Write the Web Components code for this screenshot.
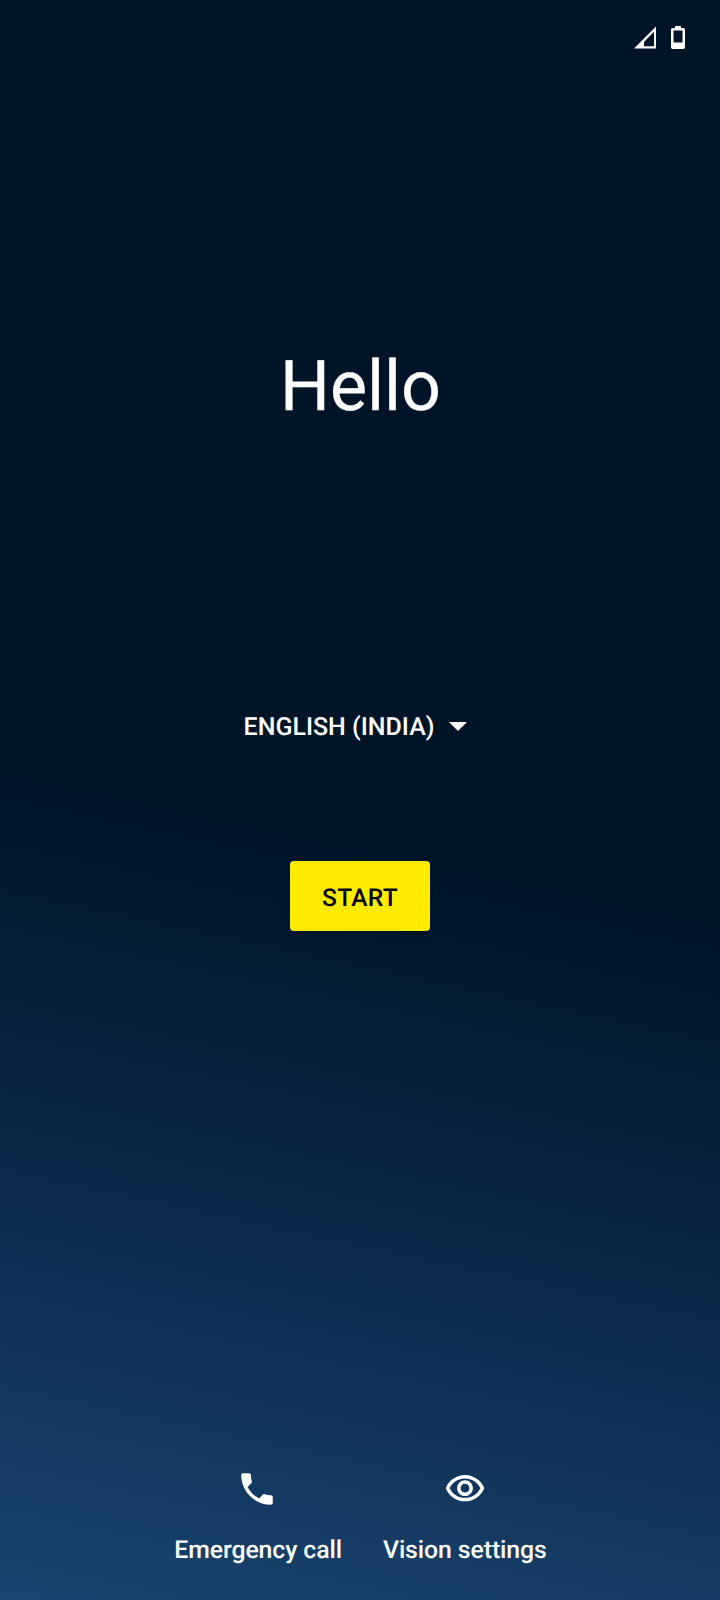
<!DOCTYPE html>
<html lang="en-IN"><head><meta charset="utf-8"><title>Hello</title>
<style>html,body{margin:0;height:100%}body{font-family:Roboto,sans-serif;color:#fff;background:#001428;text-rendering:geometricPrecision}</style></head>
<body><setup-screen></setup-screen>
<script>
const define=(name,html)=>customElements.define(name,class extends HTMLElement{
  constructor(){super();const t=document.createElement('template');t.innerHTML=html;
    this.attachShadow({mode:'open'}).append(t.content.cloneNode(true));}
});
define('status-bar',`<style>:host{display:flex;justify-content:flex-end;align-items:flex-start;height:60px;padding:26px 35px 0 0;box-sizing:border-box;gap:15px}svg{display:block}</style>
<svg width="22" height="23" viewBox="0 0 22 23"><path fill="#fff" fill-rule="evenodd" d="M22 .5V22.5H0ZM20 5.800L10 15.900V20.300H20Z"/></svg>
<svg width="14" height="23" viewBox="0 0 14 23"><path fill="#fff" fill-rule="evenodd" d="M4 0H10V2H12.5Q14 2 14 3.5V21.300Q14 23 12.500 23H1.500Q0 23 0 21.300V3.500Q0 2 1.500 2H4ZM2.500 4.500V16.500H11.500V4.500Z"/></svg>`);
define('language-picker',`<style>:host{display:flex;align-items:center;justify-content:center;height:50px;font-size:25px;font-weight:500;line-height:30px;gap:15px}span{padding-top:4px}svg{display:block}</style>
<span><slot></slot></span><svg width="18" height="9" viewBox="0 0 18 9"><path fill="#fff" d="M0 0H18L9 9Z"/></svg>`);
define('start-button',`<style>:host{display:block}button{display:block;width:140px;height:70px;margin:0 auto;padding:4px 0 0;border:0;border-radius:4px;background:#ffeb00;color:#000;font:500 24.500px/30px Roboto,sans-serif;text-rendering:geometricPrecision;letter-spacing:.3px;box-shadow:0 2px 4px rgba(0,0,0,.3)}</style>
<button><slot></slot></button>`);
define('quick-action',`<style>:host{display:flex;flex-direction:column;align-items:center;font-size:24.800px;font-weight:500;line-height:30px;letter-spacing:-.08px;gap:26px;white-space:nowrap}::slotted(svg){display:block;width:42px;height:42px;fill:#fff}</style>
<slot name="icon"></slot><span><slot></slot></span>`);
define('setup-screen',`<style>:host{display:flex;flex-direction:column;width:720px;height:1600px;overflow:hidden;background:linear-gradient(192deg,#001428 52.5%,#0d2d50 78.6%,#194570 100%)}
h1{margin:286px 0 0 1px;font-size:70px;font-weight:400;line-height:82px;text-align:center;-webkit-text-stroke:.25px #fff}
language-picker{margin:273px 0 0;padding-right:9px}start-button{margin-top:110px}nav{display:flex;justify-content:center;gap:41px;margin:537px 0 0 1px}.phone{margin-right:2px}</style>
<status-bar></status-bar><h1>Hello</h1><language-picker>ENGLISH (INDIA)</language-picker><start-button>START</start-button>
<nav><quick-action><svg class="phone" slot="icon" viewBox="0 0 24 24"><path d="M6.620 10.790c1.440 2.830 3.760 5.140 6.590 6.590l2.200-2.200c.270-.270.670-.360 1.020-.240 1.120.370 2.330.570 3.570.570.550 0 1 .450 1 1V20c0 .550-.450 1-1 1-9.390 0-17-7.610-17-17 0-.550.450-1 1-1h3.500c.550 0 1 .450 1 1 0 1.250.200 2.450.570 3.570.110.350.030.740-.250 1.020z"/></svg>Emergency call</quick-action>
<quick-action><svg slot="icon" viewBox="0 0 24 24"><path d="M12 6c3.790 0 7.170 2.130 8.820 5.500C19.170 14.870 15.790 17 12 17s-7.170-2.130-8.820-5.500C4.830 8.130 8.210 6 12 6m0-2C7 4 2.730 7.110 1 11.500 2.730 15.890 7 19 12 19s9.270-3.110 11-7.500C21.270 7.110 17 4 12 4zm0 5c1.380 0 2.500 1.120 2.500 2.500S13.380 14 12 14s-2.500-1.120-2.500-2.500S10.620 9 12 9m0-2c-2.480 0-4.500 2.020-4.500 4.500S9.520 16 12 16s4.500-2.020 4.500-4.500S14.480 7 12 7z"/></svg>Vision settings</quick-action></nav>`);
</script></body></html>
